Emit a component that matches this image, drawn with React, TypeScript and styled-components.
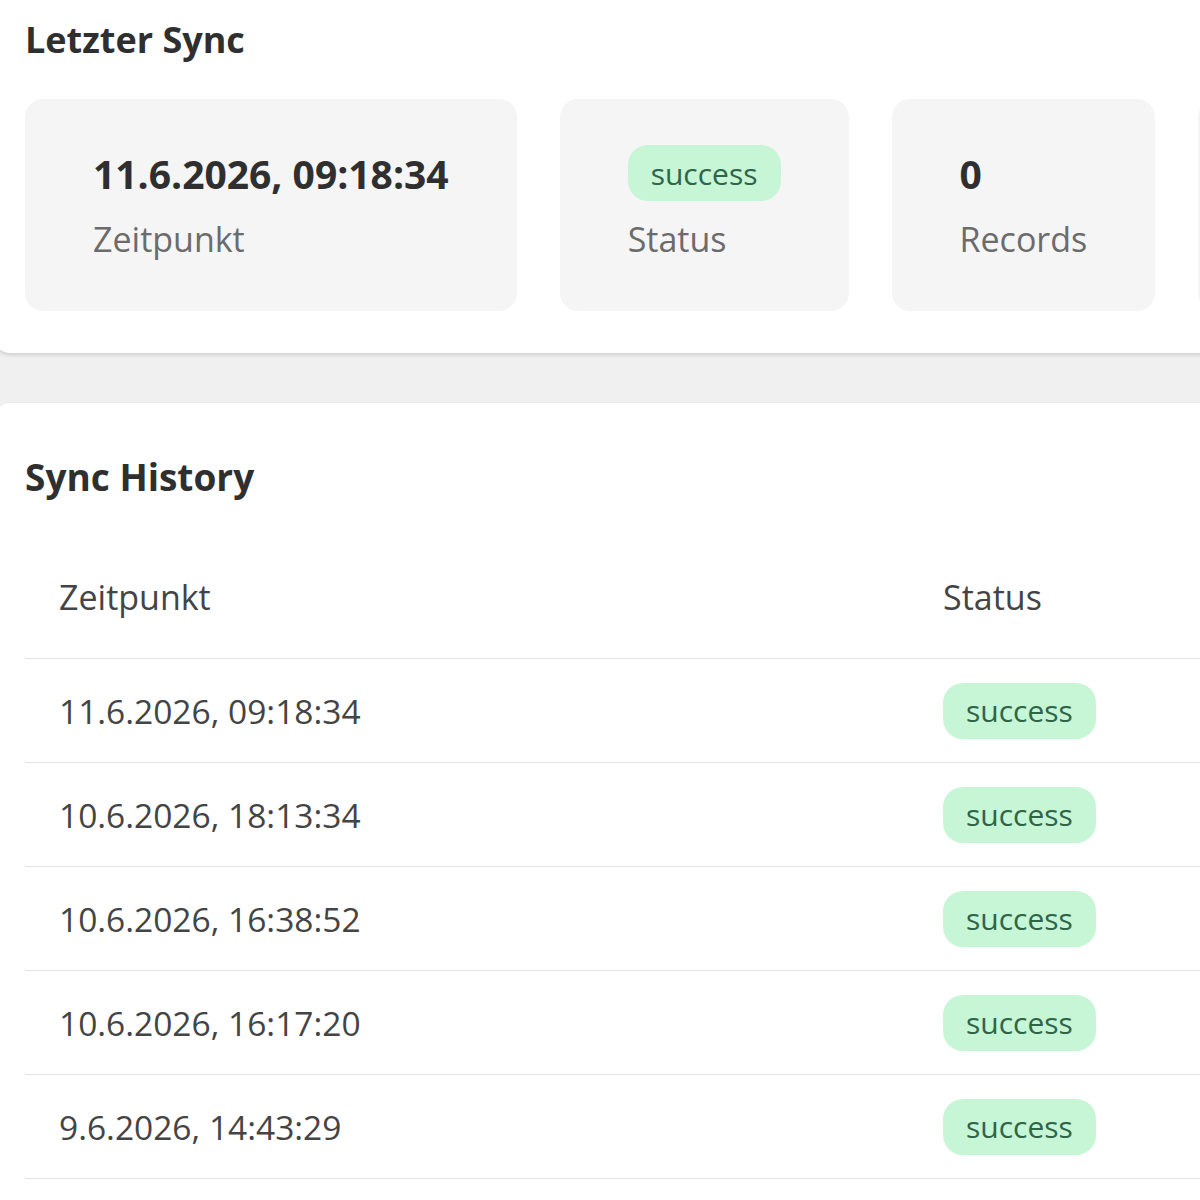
import React from "react";
import styled, { createGlobalStyle } from "styled-components";

const GlobalStyle = createGlobalStyle`
  html, body {
    margin: 0;
    padding: 0;
    background: #f0f0f0;
    overflow: hidden;
    font-family: "Open Sans", "Noto Sans", sans-serif;
    color: #333;
  }
`;

const Page = styled.div`
  width: 1200px;
  height: 1200px;
  overflow: hidden;
  display: flex;
  flex-direction: column;
  gap: 50px;
`;

const Card = styled.section<{ $first?: boolean }>`
  background: #fff;
  border-radius: 16px;
  box-shadow: 0 2px 4px rgba(0, 0, 0, 0.14);
  margin-left: -6px;
  width: 1400px;
  box-sizing: border-box;
  padding: ${(p) => (p.$first ? "58px 31px 42px" : "52px 31px 40px")};
  margin-top: ${(p) => (p.$first ? "-40px" : "0")};
`;

const Title = styled.h2<{ $size: number }>`
  margin: 0;
  font-size: ${(p) => p.$size}px;
  line-height: 1.2;
  font-weight: 700;
  color: #2f2f2f;
`;

const StatRow = styled.div`
  display: flex;
  gap: 43px;
  margin-top: 38px;
`;

const StatCard = styled.div`
  background: #f5f5f5;
  border-radius: 18px;
  padding: 44px 68px 51px;
  min-height: 117px;
  display: flex;
  flex-direction: column;
  gap: 20px;
`;

const StatValue = styled.div`
  height: 56px;
  display: flex;
  align-items: center;
  padding-top: 4px;
  box-sizing: border-box;
  font-size: 39px;
  font-weight: 700;
  color: #2f2f2f;
  white-space: nowrap;
`;

const StatLabel = styled.div`
  font-size: 34px;
  line-height: 1.2;
  color: #6b6b6b;
`;

const Badge = styled.span`
  display: inline-flex;
  align-items: center;
  height: 56px;
  padding: 0 23px;
  border-radius: 20px;
  background: #c6f6d5;
  color: #2f6449;
  font-size: 30px;
  font-weight: 400;
  box-sizing: border-box;
`;

const Table = styled.table`
  margin-top: 37px;
  border-collapse: collapse;
  width: 1380px;
`;

const HeadCell = styled.th<{ $w?: number }>`
  text-align: left;
  font-weight: 400;
  font-size: 34px;
  color: #444;
  height: 122px;
  padding: 0 34px;
  vertical-align: middle;
  border-bottom: 1px solid #e2e2e2;
  width: ${(p) => (p.$w ? `${p.$w}px` : "auto")};
  box-sizing: border-box;
`;

const Cell = styled.td`
  font-size: 33.5px;
  color: #444;
  height: 103px;
  padding: 0 34px;
  vertical-align: middle;
  border-bottom: 1px solid #e2e2e2;
  white-space: nowrap;
`;

const rows = [
  "11.6.2026, 09:18:34",
  "10.6.2026, 18:13:34",
  "10.6.2026, 16:38:52",
  "10.6.2026, 16:17:20",
  "9.6.2026, 14:43:29",
];

export default function App() {
  return (
    <Page>
      <GlobalStyle />
      <Card $first>
        <Title $size={36}>Letzter Sync</Title>
        <StatRow>
          <StatCard>
            <StatValue>11.6.2026, 09:18:34</StatValue>
            <StatLabel>Zeitpunkt</StatLabel>
          </StatCard>
          <StatCard>
            <StatValue>
              <Badge>success</Badge>
            </StatValue>
            <StatLabel>Status</StatLabel>
          </StatCard>
          <StatCard>
            <StatValue>0</StatValue>
            <StatLabel>Records</StatLabel>
          </StatCard>
          <StatCard aria-hidden="true" />
        </StatRow>
      </Card>
      <Card>
        <Title $size={37}>Sync History</Title>
        <Table>
          <thead>
            <tr>
              <HeadCell $w={884}>Zeitpunkt</HeadCell>
              <HeadCell>Status</HeadCell>
            </tr>
          </thead>
          <tbody>
            {rows.map((r) => (
              <tr key={r}>
                <Cell>{r}</Cell>
                <Cell>
                  <Badge>success</Badge>
                </Cell>
              </tr>
            ))}
          </tbody>
        </Table>
      </Card>
    </Page>
  );
}
